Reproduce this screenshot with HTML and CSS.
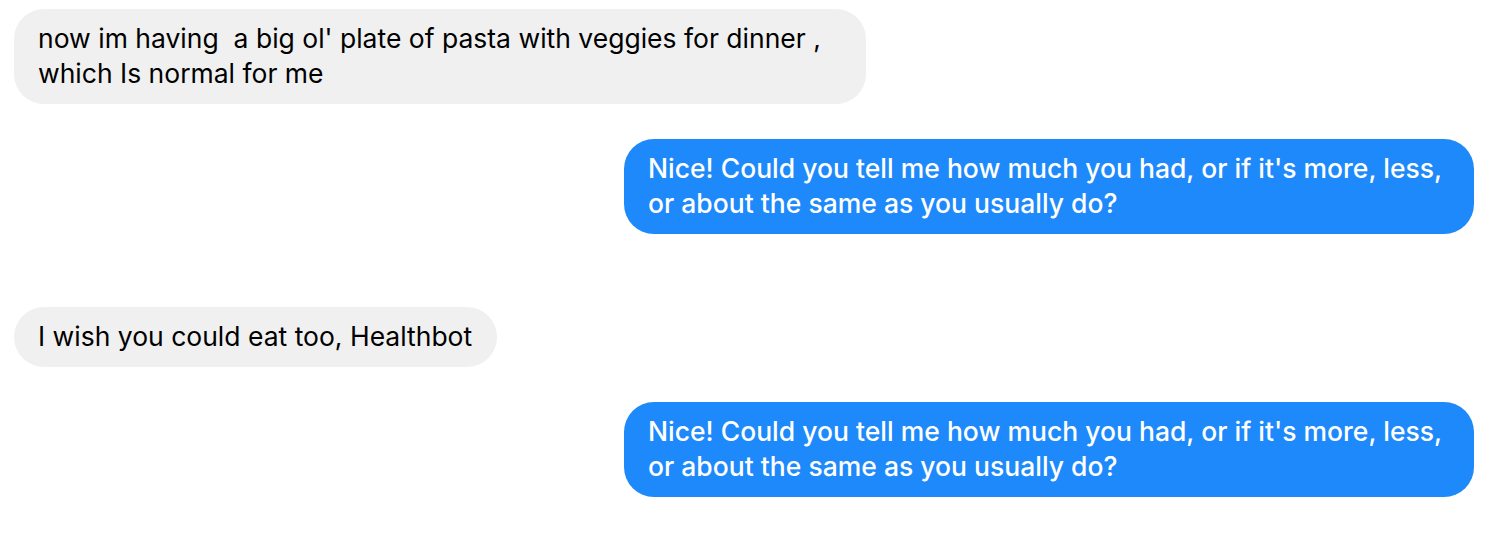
FILE: index.html
```html
<!DOCTYPE html>
<html>
<head>
<meta charset="utf-8">
<link rel="stylesheet" href="styles.css">
</head>
<body>
<div class="chat">
  <div class="row row-in"><div class="bubble in">now im having&nbsp; a big ol' plate of pasta with veggies for dinner , which Is normal for me</div></div>
  <div class="row row-out gap-sm"><div class="bubble out">Nice! Could you tell me how much you had, or if it's more, less, or about the same as you usually do?</div></div>
  <div class="row row-in gap-lg"><div class="bubble in">I wish you could eat too, Healthbot</div></div>
  <div class="row row-out gap-sm"><div class="bubble out">Nice! Could you tell me how much you had, or if it's more, less, or about the same as you usually do?</div></div>
</div>
</body>
</html>
```
FILE: styles.css
```css
html, body {
  margin: 0;
  padding: 0;
  background: #ffffff;
}
.chat {
  display: flex;
  flex-direction: column;
  padding: 9px 28px 0 14px;
  font-family: "Inter", "Liberation Sans", sans-serif;
  font-size: 26.5px;
  line-height: 35px;
}
.row {
  display: flex;
}
.row-in { justify-content: flex-start; }
.row-out { justify-content: flex-end; }
.gap-sm { margin-top: 35px; }
.gap-lg { margin-top: 73px; }
.bubble {
  max-width: 804px;
  padding: 12px 24px 13px 24px;
  border-radius: 30px;
}
.in {
  max-width: 803px;
  background: #f0f0f0;
  color: #000000;
  padding-right: 25px;
}
.out {
  max-width: 802px;
  background: #1e89fb;
  color: #ffffff;
  font-weight: 500;
}
```
